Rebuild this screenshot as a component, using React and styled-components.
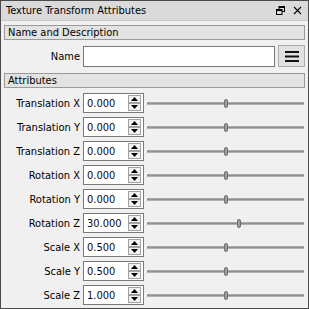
import React from "react";
import styled, { createGlobalStyle } from "styled-components";

const GlobalStyle = createGlobalStyle`
	html, body {
		margin: 0;
		padding: 0;
		background: #f0f0f0;
	}
	* {
		box-sizing: border-box;
	}
`;

const rows = [
	{ label: "Translation X", value: "0.000", pos: 0.5 },
	{ label: "Translation Y", value: "0.000", pos: 0.5 },
	{ label: "Translation Z", value: "0.000", pos: 0.5 },
	{ label: "Rotation X", value: "0.000", pos: 0.5 },
	{ label: "Rotation Y", value: "0.000", pos: 0.5 },
	{ label: "Rotation Z", value: "30.000", pos: 0.583 },
	{ label: "Scale X", value: "0.500", pos: 0.5 },
	{ label: "Scale Y", value: "0.500", pos: 0.5 },
	{ label: "Scale Z", value: "1.000", pos: 0.5 },
];

const App = () => {
	return (
		<>
			<GlobalStyle />
			<Panel>
				<TitleBar>
					<span>Texture Transform Attributes</span>
					<TitleIcons>
						<svg width="9" height="9" viewBox="0 0 9 9">
							<rect x="3" y="0.5" width="5.5" height="5" fill="none" stroke="#000" />
							<rect x="3" y="0" width="6" height="2" fill="#000" />
							<rect x="0.5" y="3.5" width="5.5" height="5" fill="#dadada" stroke="#000" />
							<rect x="0" y="3" width="6" height="2" fill="#000" />
						</svg>
						<svg width="9" height="9" viewBox="0 0 9 9">
							<path d="M1 1 L8 8 M8 1 L1 8" stroke="#000" strokeWidth="1.1" />
						</svg>
					</TitleIcons>
				</TitleBar>
				<Body>
					<SectionHeader>Name and Description</SectionHeader>
					<NameRow>
						<Label>Name</Label>
						<TextInput />
						<MenuButton>
							<svg width="14" height="11" viewBox="0 0 14 11">
								<rect x="0" y="0" width="14" height="2" fill="#111" />
								<rect x="0" y="4.5" width="14" height="2" fill="#111" />
								<rect x="0" y="9" width="14" height="2" fill="#111" />
							</svg>
						</MenuButton>
					</NameRow>
					<SectionHeader>Attributes</SectionHeader>
					<AttrList>
						{rows.map((r) => (
							<AttrRow key={r.label}>
								<Label>{r.label}</Label>
								<SpinBox>
									<SpinValue>{r.value}</SpinValue>
									<SpinButtons>
										<SpinButton>
											<svg width="7" height="4" viewBox="0 0 7 4">
												<path d="M3.5 0 L7 4 L0 4 Z" fill="#000" />
											</svg>
										</SpinButton>
										<SpinButton>
											<svg width="7" height="4" viewBox="0 0 7 4">
												<path d="M0 0 L7 0 L3.5 4 Z" fill="#000" />
											</svg>
										</SpinButton>
									</SpinButtons>
								</SpinBox>
								<Slider>
									<Track />
									<Handle style={{ left: `calc(${r.pos * 100}% - 2px)` }} />
								</Slider>
							</AttrRow>
						))}
					</AttrList>
				</Body>
			</Panel>
		</>
	);
};

const Panel = styled.div`
	width: 309px;
	height: 309px;
	border: 1px solid #4b4b4b;
	background: #f0f0f0;
	display: flex;
	flex-direction: column;
	font-family: "DejaVu Sans Condensed", "Liberation Sans", Arial, sans-serif;
	font-size: 11px;
	color: #000;
`;

const TitleBar = styled.div`
	height: 20px;
	background: #dadada;
	border-bottom: 1px solid #c8c8c8;
	display: flex;
	align-items: center;
	justify-content: space-between;
	padding: 0 6px 0 5px;
	font-size: 11px;
`;

const TitleIcons = styled.div`
	display: flex;
	gap: 8px;
	align-items: center;
`;

const Body = styled.div`
	padding: 4px 3px 0 3px;
	display: flex;
	flex-direction: column;
`;

const SectionHeader = styled.div`
	height: 15px;
	border: 1px solid #9a9a9a;
	background: #e3e3e3;
	padding-left: 3px;
	line-height: 13px;
	font-size: 11px;
`;

const Label = styled.div`
	text-align: right;
	white-space: nowrap;
`;

const NameRow = styled.div`
	display: grid;
	grid-template-columns: 76px 192px 27px;
	gap: 3px;
	align-items: center;
	margin: 5px 0 6px 0;
`;

const TextInput = styled.div`
	height: 21px;
	background: #fff;
	border: 1px solid #7a7a7a;
`;

const MenuButton = styled.div`
	height: 22px;
	background: #e1e1e1;
	border: 1px solid #adadad;
	display: flex;
	align-items: center;
	justify-content: center;
`;

const AttrList = styled.div`
	display: flex;
	flex-direction: column;
	gap: 4px;
	margin-top: 5px;
`;

const AttrRow = styled.div`
	display: grid;
	grid-template-columns: 76px 61px 1fr;
	gap: 3px;
	align-items: center;
	height: 20px;
`;

const SpinBox = styled.div`
	height: 20px;
	background: #fff;
	border: 1px solid #7a7a7a;
	display: flex;
	align-items: center;
	justify-content: space-between;
	padding: 0 2px 0 3px;
`;

const SpinValue = styled.span`
	color: #0a0a20;
`;

const SpinButtons = styled.div`
	display: flex;
	flex-direction: column;
	gap: 0;
`;

const SpinButton = styled.div`
	width: 13px;
	height: 8px;
	background: #f2f2f2;
	border: 1px solid #a0a0a0;
	display: flex;
	align-items: center;
	justify-content: center;
`;

const Slider = styled.div`
	position: relative;
	height: 20px;
	margin-right: 1px;
`;

const Track = styled.div`
	position: absolute;
	left: 0;
	right: 0;
	top: 9px;
	height: 3px;
	background: #8e8e8e;
	border-top: 1px solid #a8a8a8;
	border-bottom: 1px solid #b0b0b0;
`;

const Handle = styled.div`
	position: absolute;
	top: 6px;
	width: 4px;
	height: 9px;
	border-radius: 2px;
	background: #a0a0a0;
	border: 1px solid #6e6e6e;
`;

export default App;
